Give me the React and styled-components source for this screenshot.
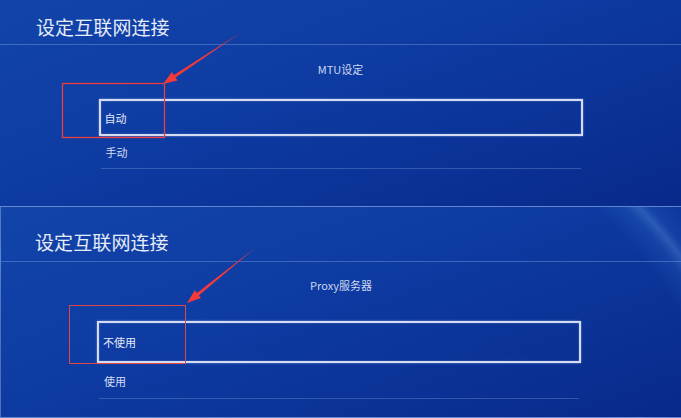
import React from "react";
import styled, { createGlobalStyle } from "styled-components";

const Global = createGlobalStyle`
  html, body { margin: 0; padding: 0; background: #0a2d8e; }
  body { font-family: "Noto Sans CJK SC", "Noto Sans", sans-serif; }
`;

const Page = styled.div`
  position: relative;
  width: 681px;
  height: 418px;
  overflow: hidden;
  display: flex;
  flex-direction: column;
`;

const Panel = styled.section`
  position: relative;
  box-sizing: border-box;
  height: ${(p) => p.$h}px;
  display: flex;
  flex-direction: column;
  border-bottom: 1px solid rgba(170, 195, 240, 0.55);
  border-left: ${(p) => (p.$edge ? "1px solid rgba(170,195,240,0.45)" : "none")};
  background:
    ${(p) =>
      p.$arc
        ? "radial-gradient(circle at 300px 330px, transparent 440px, rgba(90,160,240,0.12) 462px, rgba(130,190,255,0.26) 472px, rgba(90,160,240,0.1) 480px, transparent 500px),"
        : ""}
    linear-gradient(160deg, #1244aa 0%, #0e3ca3 40%, #0b3398 70%, #08298a 100%);
`;

const Header = styled.header`
  box-sizing: border-box;
  height: ${(p) => p.$h}px;
  padding: ${(p) => p.$pt}px 0 0 ${(p) => p.$pl}px;
  border-bottom: 1px solid rgba(150, 180, 235, 0.35);
  flex: none;
`;

const Title = styled.h1`
  margin: 0;
  font-size: 19px;
  line-height: 20px;
  font-weight: 400;
  color: #e6ecf8;
  letter-spacing: 0.1px;
`;

const Subtitle = styled.div`
  margin-top: ${(p) => p.$mt}px;
  text-align: center;
  font-size: 11px;
  line-height: 14px;
  color: #cdd8ef;
`;

const OptionList = styled.div`
  width: 484px;
  margin: ${(p) => p.$mt}px auto 0;
  transform: translateX(${(p) => p.$dx || 0}px);
  display: flex;
  flex-direction: column;
`;

const SelectedOption = styled.div`
  box-sizing: border-box;
  height: ${(p) => p.$h}px;
  display: flex;
  align-items: center;
  padding-left: 4px;
  border: 2px solid #d3dcf0;
  box-shadow: 0 0 2px rgba(200, 215, 250, 0.6), inset 0 0 2px rgba(200, 215, 250, 0.4);
  font-size: 11px;
  color: #e3e9f6;
`;

const Option = styled.div`
  box-sizing: border-box;
  height: ${(p) => p.$h}px;
  display: flex;
  align-items: center;
  padding: 0 0 0 5px;
  margin: 0 2px;
  border-bottom: 1px solid rgba(150, 180, 235, 0.3);
  font-size: 11px;
  color: #d6def2;
`;

const Annotations = styled.svg`
  position: absolute;
  left: 0;
  top: 0;
  pointer-events: none;
`;

export default function App() {
  return (
    <>
      <Global />
      <Page>
        <Panel $h={207}>
          <Header $h={45} $pt={17} $pl={36}>
            <Title>设定互联网连接</Title>
          </Header>
          <Subtitle $mt={17}>MTU设定</Subtitle>
          <OptionList $mt={23}>
            <SelectedOption $h={37}>自动</SelectedOption>
            <Option $h={33}>手动</Option>
          </OptionList>
        </Panel>
        <Panel $h={211} $edge $arc>
          <Header $h={55} $pt={25} $pl={34}>
            <Title>设定互联网连接</Title>
          </Header>
          <Subtitle $mt={16}>Proxy服务器</Subtitle>
          <OptionList $mt={29} $dx={-2}>
            <SelectedOption $h={42}>不使用</SelectedOption>
            <Option $h={36}>使用</Option>
          </OptionList>
        </Panel>
        <Annotations width="681" height="418" viewBox="0 0 681 418">
          <rect x="62.5" y="83.5" width="102" height="54" fill="none" stroke="#f03c3c" strokeWidth="1.3" />
          <polygon
            points="240,33 175.5,77.5 177.5,80.4 163,84 171.9,72 173.9,74.9"
            fill="#f23a3a"
          />
          <rect x="69.5" y="305.5" width="116" height="58" fill="none" stroke="#e04848" strokeWidth="1" />
          <polygon
            points="255,248 198.8,295.4 201,298.1 187,303 194.8,290.3 196.96,293"
            fill="#f23a3a"
          />
        </Annotations>
      </Page>
    </>
  );
}
